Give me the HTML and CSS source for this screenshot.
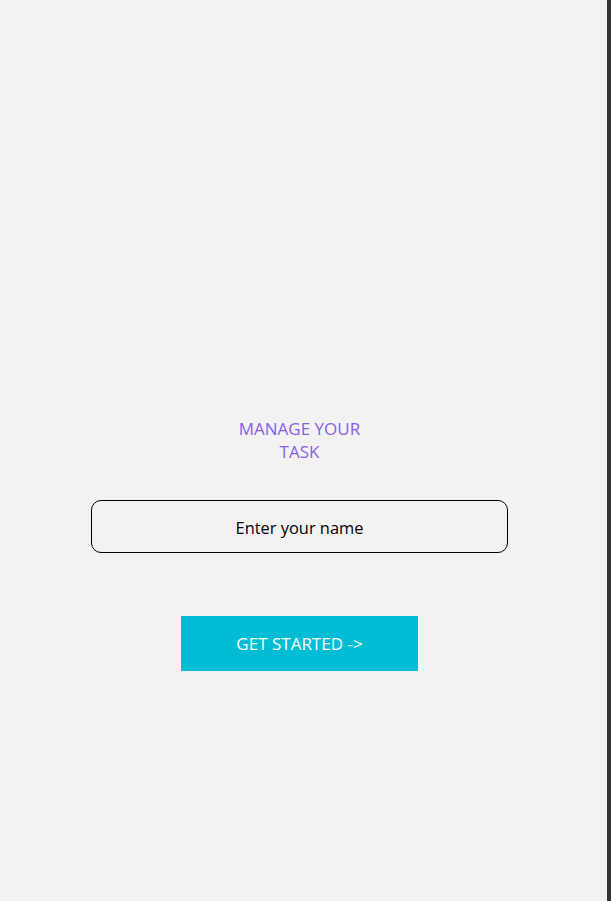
FILE: index.html
```html
<!DOCTYPE html>
<html lang="en">
<head>
<meta charset="utf-8">
<title>Manage your task</title>
<link rel="stylesheet" href="styles.css">
</head>
<body>
<div class="page">
  <main class="main">
    <h1 class="title">MANAGE YOUR<br>TASK</h1>
    <input class="name-input" type="text" placeholder="Enter your name">
    <button class="start-btn" type="button">GET STARTED -&gt;</button>
  </main>
  <div class="edge"></div>
</div>
</body>
</html>
```

FILE: styles.css
```css
html, body {
  margin: 0;
  padding: 0;
  height: 100%;
}
body {
  background: #f2f2f2;
  font-family: "Open Sans", "Noto Sans", "DejaVu Sans", sans-serif;
  overflow: hidden;
}
.page {
  display: flex;
  height: 100%;
}
.main {
  flex: 1;
  padding-right: 8px;
  padding-top: 417px;
  display: flex;
  flex-direction: column;
  align-items: center;
}
.edge {
  width: 4px;
  background: #333333;
}
.title {
  margin: 0;
  font-size: 17px;
  line-height: 23px;
  font-weight: 400;
  color: #8b5ce8;
  text-align: center;
}
.name-input {
  margin-top: 37px;
  box-sizing: border-box;
  width: 417px;
  height: 53px;
  border: 1px solid #000;
  border-radius: 10px;
  background: transparent;
  font-family: inherit;
  font-size: 16.4px;
  color: #000;
  text-align: center;
  padding: 2px 10px 0;
  outline: none;
}
.name-input::placeholder {
  color: #000;
  opacity: 1;
}
.start-btn {
  margin-top: 63px;
  width: 237px;
  height: 55px;
  border: none;
  background: #00bcd4;
  color: #fff;
  font-family: inherit;
  font-size: 17px;
  padding: 0;
  cursor: pointer;
}
```
